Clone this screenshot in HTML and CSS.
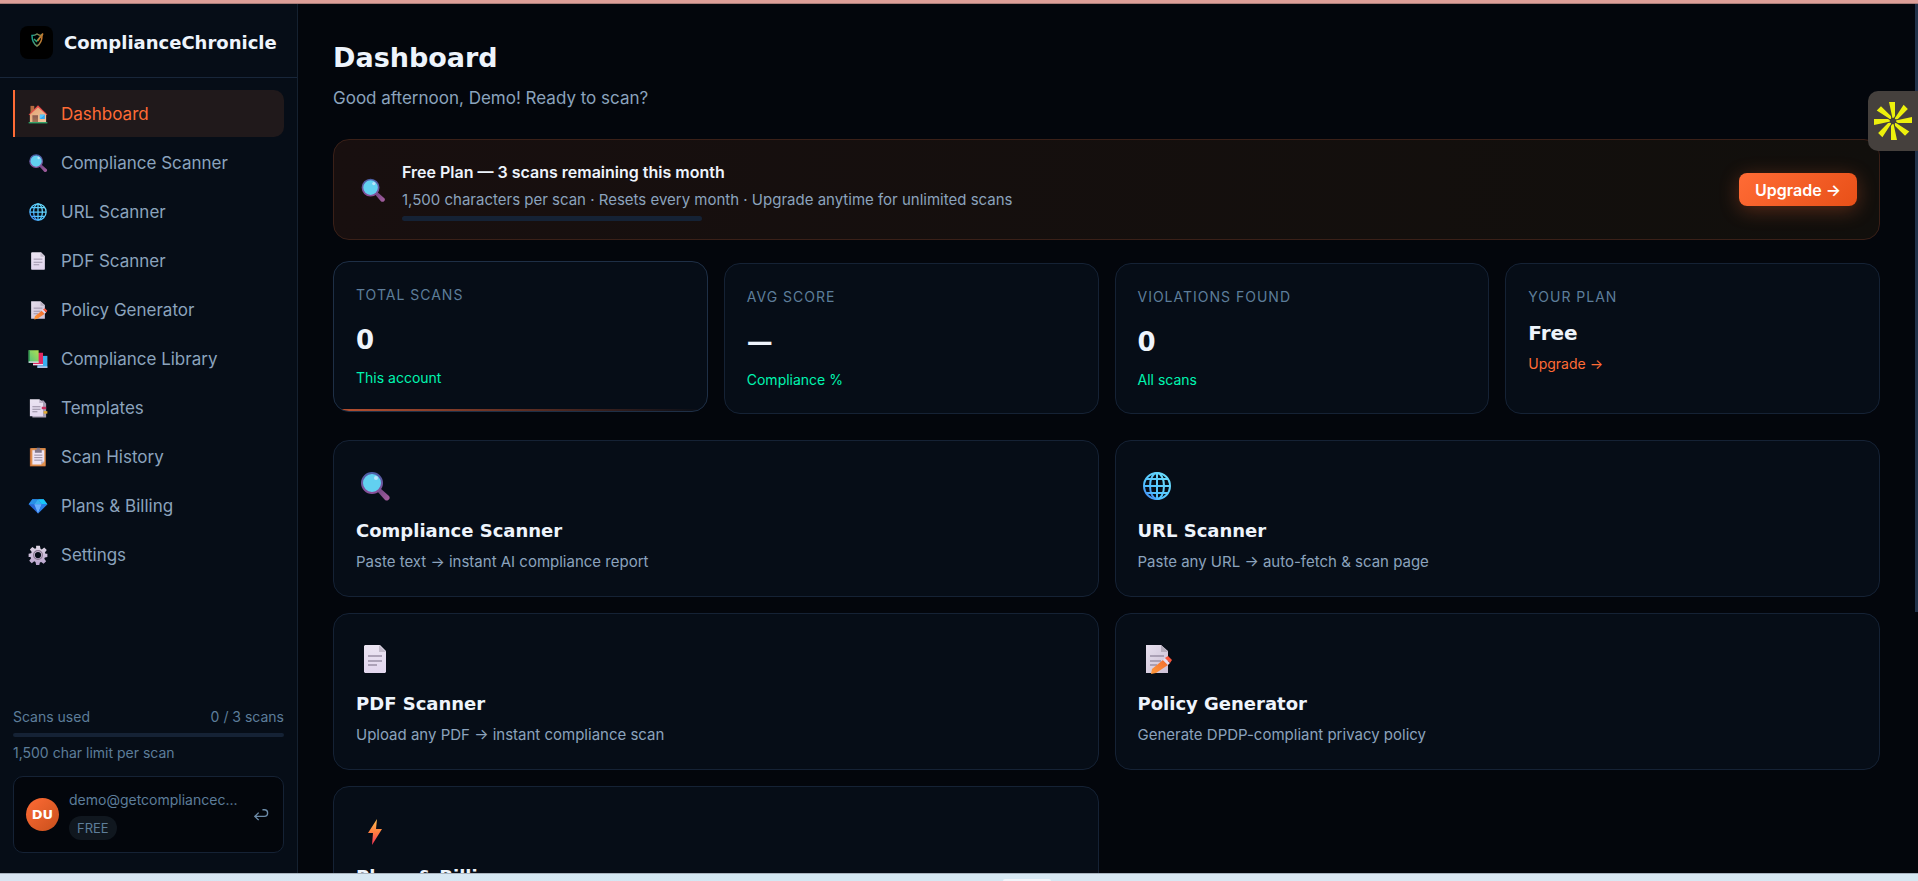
FILE: index.html
```
<!DOCTYPE html>
<html lang="en">

<head>
    <meta charset="UTF-8">
    <meta name="viewport" content="width=device-width, initial-scale=1.0">
    <title>Dashboard - ComplianceChronicle</title>
    <link rel="stylesheet" href="styles.css">
</head>

<body>
    <svg class="sprite" aria-hidden="true">
        <defs>
            <linearGradient id="g-wall" x1="0" y1="0" x2="1" y2="1">
                <stop offset="0" stop-color="#e0a070" />
                <stop offset="1" stop-color="#f4c8a0" />
            </linearGradient>
            <linearGradient id="g-door" x1="0" y1="0" x2="0" y2="1">
                <stop offset="0" stop-color="#8a5a50" />
                <stop offset="1" stop-color="#a87858" />
            </linearGradient>
            <linearGradient id="g-handle" x1="0" y1="0" x2="1" y2="1">
                <stop offset="0" stop-color="#6b4480" />
                <stop offset="1" stop-color="#a85fa0" />
            </linearGradient>
            <linearGradient id="g-rim" x1="0" y1="0" x2="0" y2="1">
                <stop offset="0" stop-color="#4b5fa8" />
                <stop offset="1" stop-color="#8a4f98" />
            </linearGradient>
            <linearGradient id="g-globe" x1="1" y1="0" x2="0" y2="1">
                <stop offset="0" stop-color="#6ee0fa" />
                <stop offset="0.7" stop-color="#50c0ff" />
                <stop offset="1" stop-color="#3f78f0" />
            </linearGradient>
            <linearGradient id="g-paper" x1="0" y1="0" x2="0" y2="1">
                <stop offset="0" stop-color="#ebe4f2" />
                <stop offset="1" stop-color="#e2d6ee" />
            </linearGradient>
            <linearGradient id="g-note" x1="0" y1="0" x2="1" y2="1">
                <stop offset="0" stop-color="#e6dfee" />
                <stop offset="1" stop-color="#cdc0d6" />
            </linearGradient>
            <linearGradient id="g-pencil" x1="0" y1="1" x2="1" y2="0">
                <stop offset="0" stop-color="#ff9a3c" />
                <stop offset="1" stop-color="#f06a30" />
            </linearGradient>
            <linearGradient id="g-green" x1="1" y1="0" x2="0" y2="1">
                <stop offset="0" stop-color="#b0e050" />
                <stop offset="1" stop-color="#50c080" />
            </linearGradient>
            <linearGradient id="g-bolt" x1="0" y1="0" x2="0" y2="1">
                <stop offset="0" stop-color="#ffc050" />
                <stop offset="0.5" stop-color="#ff8040" />
                <stop offset="1" stop-color="#f83058" />
            </linearGradient>
            <linearGradient id="g-gear" x1="0" y1="0" x2="0" y2="1">
                <stop offset="0" stop-color="#e0d8e6" />
                <stop offset="1" stop-color="#b8a2cc" />
            </linearGradient>
            <linearGradient id="g-shield" x1="0" y1="0" x2="1" y2="0">
                <stop offset="0" stop-color="#18a090" />
                <stop offset="1" stop-color="#d07828" />
            </linearGradient>
        </defs>

        <symbol id="home" viewBox="0 0 32 32">
            <path d="M4 3h6v12H4z" fill="#b56a40" />
            <path d="M3 15 16 4l13 11v14H3z" fill="url(#g-wall)" />
            <path d="M7 18h9v11H7z" fill="url(#g-door)" />
            <path d="M19 17h8v7h-8z" fill="#35a8f0" />
            <path d="M19 17h8l-8 7z" fill="#58c8ff" />
            <path d="M1 17 16 2l15 15-1 1L16 5 2 18z" fill="#e84848" />
            <path d="M1 29h30v2H1z" fill="#2fb070" />
        </symbol>

        <symbol id="search" viewBox="0 0 32 32">
            <path d="m21 18 9 8c2 2-1 6-4 4l-8-9z" fill="url(#g-handle)" />
            <circle cx="13" cy="13" r="10" fill="#62d0f0" stroke="url(#g-rim)" stroke-width="2" />
            <circle cx="17" cy="8" r="2" fill="#b8e4fa" />
        </symbol>

        <symbol id="globe" viewBox="0 0 32 32">
            <g fill="none" stroke="url(#g-globe)" stroke-width="2">
                <circle cx="16" cy="16" r="13" />
                <ellipse cx="16" cy="16" rx="7" ry="13" />
                <path d="M16 3q.01 13 0 26M3 16q13 .01 26 0M5 9q11 .01 22 0M5 23q11 .01 22 0" />
            </g>
        </symbol>

        <symbol id="page" viewBox="0 0 32 32">
            <path d="M6 2h15l6 6v21l-1 1H6l-1-1V3z" fill="url(#g-paper)" />
            <path d="m20 2 7 7h-7z" fill="#c4bccc" />
            <path d="M9 13h14M9 18h14M9 22h9" stroke="#9a90a6" stroke-width="1.5" />
        </symbol>

        <symbol id="memo" viewBox="0 0 32 32">
            <path d="M5 2h15l7 6v22H5z" fill="url(#g-note)" />
            <path d="m20 2 7 7h-7z" fill="#b5adbd" />
            <path d="M9 13h14M9 18h11M9 22h7" stroke="#9a90a6" stroke-width="1.5" />
            <path d="m22 17 5 5-12 8-5 1 1-5z" fill="url(#g-pencil)" />
            <path d="m22 17 2-2 5 5-2 2z" fill="#e8dcec" />
            <path d="m24 15 3-2 4 4-2 3z" fill="#f8563c" />
        </symbol>

        <symbol id="books" viewBox="0 0 32 32">
            <path d="M15 11h16v19H15z" fill="#38b0f0" />
            <path d="M15 28h16v2H15z" fill="#d8d0ec" />
            <path d="M8 6h16v20H8z" fill="#e02860" />
            <path d="M8 24h16v2H8z" fill="#eadcf0" />
            <path d="M1 2h16v20H1z" fill="url(#g-green)" />
            <path d="M1 2h2v18H1z" fill="#309a50" />
            <path d="M1 20h16v2H1z" fill="#e0dcf2" />
        </symbol>

        <symbol id="tabs" viewBox="0 0 32 32">
            <path d="M7 4h18l4 5v22H7z" fill="#a89eb4" />
            <path d="M3 2h15l6 6v21H3z" fill="url(#g-paper)" />
            <path d="m18 2 6 6h-6z" fill="#bdb4c8" />
            <path d="M7 14h13M7 18h13M7 22h8" stroke="#90869c" stroke-width="1.5" />
            <path d="M22 14h7v4h-7z" fill="#c83060" />
            <path d="M25 21h6v4h-6z" fill="#e0aa30" />
        </symbol>

        <symbol id="clipboard" viewBox="0 0 32 32">
            <path d="M3 2h25v29H3z" fill="#c8703c" />
            <path d="M5 2h23v28H5z" fill="#e0904c" />
            <path d="M7 5h19v18l-5 5H7z" fill="#eee4f4" />
            <path d="M21 28v-5h5z" fill="#b8aec2" />
            <path d="M11 4h3V1h5v3h3v5H11z" fill="#82788c" />
            <path d="M10 13h13M10 17h13M10 21h13" stroke="#90869c" stroke-width="1.5" />
        </symbol>

        <symbol id="gem" viewBox="0 0 32 32">
            <path d="M7 5h18l6 8-15 15L1 13z" fill="#2868d8" />
            <path d="M7 5h9l-6 8H1z" fill="#2890e8" />
            <path d="M16 5h9l6 8h-9z" fill="#18c8f8" />
            <path d="m16 5 6 8H10z" fill="#38b0f0" />
            <path d="M10 13h12l-6 15z" fill="#68b0ff" />
            <path d="M22 13h9L16 28z" fill="#2a80e8" />
        </symbol>

        <symbol id="gear" viewBox="0 0 32 32">
            <path fill="url(#g-gear)" fill-rule="evenodd"
                d="M13 1h6l1 5 2 1 4-3 4 4-3 4 1 2 3 0v5l-4 1-1 2 3 4-4 4-4-3-2 1-1 4h-5l-1-5-2-1-4 3-4-4 3-4-1-2-3 0v-5l4-1 1-2-3-4 4-4 4 3 2-1zM16 11a5 5 0 1 0 0 10 5 5 0 0 0 0-10z" />
            <circle cx="16" cy="16" r="7" fill="none" stroke="#887890" stroke-width="2" />
        </symbol>

        <symbol id="bolt" viewBox="0 0 32 32">
            <path d="m18 3-9 14h5l-1 12 10-16h-6z" fill="url(#g-bolt)" />
        </symbol>

        <symbol id="shield" viewBox="0 0 32 32">
            <path d="M16 4c4 3 7 3 10 3 0 10-2 16-10 21C8 23 6 17 6 7c3 0 6 0 10-3z" fill="none" stroke="url(#g-shield)"
                stroke-width="3" />
            <path d="m10 14 5 5 12-15" fill="none" stroke="#2aa878" stroke-width="3" />
            <path d="m17 18 11-15" stroke="#c87830" stroke-width="3" />
        </symbol>

        <symbol id="return" viewBox="0 0 16 16">
            <path d="M1 10h10a3.500 3.500 0 0 0 0-7h-2M5 6 1 10l4 4" fill="none" stroke="currentColor"
                stroke-width="1.500" />
        </symbol>

        <symbol id="burst" viewBox="0 0 38 38">
            <path id="ray" d="M15 0h6v14q-1 2-2 2t-1-2z" fill="#ecf00c" />
            <use href="#ray" transform="rotate(45 19 19)" />
            <use href="#ray" transform="rotate(90 19 19)" />
            <use href="#ray" transform="rotate(135 19 19)" />
            <use href="#ray" transform="rotate(180 19 19)" />
            <use href="#ray" transform="rotate(225 19 19)" />
            <use href="#ray" transform="rotate(270 19 19)" />
            <use href="#ray" transform="rotate(315 19 19)" />
        </symbol>
    </svg>

    <div class="strip-top"></div>

    <div class="app">
        <aside class="sidebar">
            <a class="brand" href="#">
                <span class="brand-logo"><svg class="brand-icon"><use href="#shield" /></svg></span>
                <span class="brand-name">ComplianceChronicle</span>
            </a>
            <nav class="nav">
                <a class="nav-item active" href="#"><svg class="nav-icon"><use href="#home" /></svg>Dashboard</a>
                <a class="nav-item" href="#"><svg class="nav-icon"><use href="#search" /></svg>Compliance Scanner</a>
                <a class="nav-item" href="#"><svg class="nav-icon"><use href="#globe" /></svg>URL Scanner</a>
                <a class="nav-item" href="#"><svg class="nav-icon"><use href="#page" /></svg>PDF Scanner</a>
                <a class="nav-item" href="#"><svg class="nav-icon"><use href="#memo" /></svg>Policy Generator</a>
                <a class="nav-item" href="#"><svg class="nav-icon"><use href="#books" /></svg>Compliance Library</a>
                <a class="nav-item" href="#"><svg class="nav-icon"><use href="#tabs" /></svg>Templates</a>
                <a class="nav-item" href="#"><svg class="nav-icon"><use href="#clipboard" /></svg>Scan History</a>
                <a class="nav-item" href="#"><svg class="nav-icon"><use href="#gem" /></svg>Plans &amp; Billing</a>
                <a class="nav-item" href="#"><svg class="nav-icon"><use href="#gear" /></svg>Settings</a>
            </nav>
            <div class="sidebar-foot">
                <div class="usage">
                    <div class="usage-row"><span>Scans used</span><span>0 / 3 scans</span></div>
                    <div class="track"></div>
                    <div>1,500 char limit per scan</div>
                </div>
                <div class="user">
                    <div class="avatar">DU</div>
                    <div class="user-info">
                        <div class="user-mail">demo@getcompliancec...</div>
                        <span class="plan-tag">FREE</span>
                    </div>
                    <button class="logout" type="button" aria-label="Log out"><svg class="logout-icon"><use href="#return" /></svg></button>
                </div>
            </div>
        </aside>

        <main class="main">
            <h1 class="title">Dashboard</h1>
            <p class="subtitle">Good afternoon, Demo! Ready to scan?</p>

            <section class="banner">
                <svg class="banner-icon"><use href="#search" /></svg>
                <div class="banner-body">
                    <div class="banner-title">Free Plan — 3 scans remaining this month</div>
                    <div class="banner-text">1,500 characters per scan · Resets every month · Upgrade anytime for unlimited scans</div>
                    <div class="track banner-track"></div>
                </div>
                <button class="upgrade" type="button">Upgrade →</button>
            </section>

            <section class="stats">
                <div class="card stat raised">
                    <div class="stat-label">Total Scans</div>
                    <div class="stat-value">0</div>
                    <div class="stat-note">This account</div>
                </div>
                <div class="card stat">
                    <div class="stat-label">Avg Score</div>
                    <div class="stat-value">—</div>
                    <div class="stat-note">Compliance %</div>
                </div>
                <div class="card stat">
                    <div class="stat-label">Violations Found</div>
                    <div class="stat-value">0</div>
                    <div class="stat-note">All scans</div>
                </div>
                <div class="card stat">
                    <div class="stat-label">Your Plan</div>
                    <div class="stat-value plan">Free</div>
                    <a class="stat-note orange" href="#">Upgrade →</a>
                </div>
            </section>

            <section class="tools">
                <a class="card tool" href="#">
                    <svg class="tool-icon"><use href="#search" /></svg>
                    <h2 class="tool-title">Compliance Scanner</h2>
                    <p class="tool-text">Paste text → instant AI compliance report</p>
                </a>
                <a class="card tool" href="#">
                    <svg class="tool-icon"><use href="#globe" /></svg>
                    <h2 class="tool-title">URL Scanner</h2>
                    <p class="tool-text">Paste any URL → auto-fetch &amp; scan page</p>
                </a>
                <a class="card tool" href="#">
                    <svg class="tool-icon"><use href="#page" /></svg>
                    <h2 class="tool-title">PDF Scanner</h2>
                    <p class="tool-text">Upload any PDF → instant compliance scan</p>
                </a>
                <a class="card tool" href="#">
                    <svg class="tool-icon"><use href="#memo" /></svg>
                    <h2 class="tool-title">Policy Generator</h2>
                    <p class="tool-text">Generate DPDP-compliant privacy policy</p>
                </a>
                <a class="card tool" href="#">
                    <svg class="tool-icon"><use href="#bolt" /></svg>
                    <h2 class="tool-title">Plans &amp; Billing</h2>
                </a>
            </section>
        </main>
        <div class="scroll-thumb"></div>
        <button class="widget" type="button" aria-label="Open widget"><svg class="widget-icon"><use href="#burst" /></svg></button>
    </div>

    <div class="strip-bottom"><div class="tab"></div></div>
</body>

</html>
```
FILE: styles.css
```
* {
    box-sizing: border-box;
}

body {
    background-color: #03060c;
    color: #8ba3bd;
    display: flex;
    flex-direction: column;
    font-family: Inter, "Liberation Sans", sans-serif;
    height: 100vh;
    margin: 0;
    overflow: hidden;
}

a {
    color: inherit;
    text-decoration: none;
}

button {
    border: none;
    cursor: pointer;
    font-family: inherit;
}

.sprite {
    height: 0;
    position: absolute;
    width: 0;
}

.strip-top {
    background-color: #dd9f98;
    border-bottom: #a87c78 1px solid;
    flex: none;
    height: 4px;
}

.strip-bottom {
    background: linear-gradient(90deg, #d9e6f2, #d3e8f3 40%, #dbe8f3 70%, #d6e8f2);
    border-top: #a9b4bf 1px solid;
    display: flex;
    flex: none;
    height: 8px;
    justify-content: center;
    padding: 5px 0 0 136px;
}

.tab {
    background-color: #f1f5fa;
    border-radius: 4px 4px 0 0;
    width: 48px;
}

.app {
    display: flex;
    flex: 1;
    min-height: 0;
    position: relative;
}

/* sidebar */
.sidebar {
    background-color: #060d17;
    border-right: #152130 1px solid;
    display: flex;
    flex: none;
    flex-direction: column;
    width: 298px;
}

.brand {
    align-items: center;
    border-bottom: #18263a 1px solid;
    display: flex;
    gap: 11px;
    height: 74px;
    padding: 3px 12px 0 20px;
}

.brand-logo {
    align-items: center;
    background-color: #000000;
    border-radius: 8px;
    display: flex;
    flex: none;
    height: 33px;
    justify-content: center;
    padding-bottom: 4px;
    width: 33px;
}

.brand-icon {
    height: 16px;
    width: 16px;
}

.brand-name {
    color: #eef4fc;
    font-family: "DejaVu Sans", sans-serif;
    font-size: 18px;
    font-weight: 700;
}

.nav {
    display: flex;
    flex-direction: column;
    gap: 2px;
    padding: 12px 13px;
}

.nav-item {
    align-items: center;
    border-left: transparent 2px solid;
    border-radius: 10px;
    display: flex;
    font-size: 17px;
    gap: 13px;
    height: 47px;
    padding-left: 13px;
}

.nav-item.active {
    background-color: #20191b;
    border-bottom-left-radius: 0;
    border-left-color: #ff6b35;
    border-top-left-radius: 0;
    color: #ff6b35;
}

.nav-icon {
    height: 20px;
    width: 20px;
}

.sidebar-foot {
    color: #5d7d9a;
    font-size: 14px;
    line-height: 22px;
    margin-top: auto;
    padding: 0 13px 20px;
}

.usage-row {
    display: flex;
    justify-content: space-between;
}

.track {
    background-color: #152235;
    border-radius: 3px;
    height: 4px;
    margin: 5px 0;
}

.user {
    align-items: center;
    background-color: #03060c;
    border: #152235 1px solid;
    border-radius: 10px;
    display: flex;
    gap: 10px;
    margin-top: 12px;
    padding: 12px;
}

.avatar {
    background: linear-gradient(135deg, #ff6b35, #c8501c);
    border-radius: 50%;
    color: #ffffff;
    flex: none;
    font-family: "DejaVu Sans", sans-serif;
    font-size: 13px;
    font-weight: 700;
    line-height: 33px;
    text-align: center;
    width: 33px;
}

.user-info {
    flex: 1;
    min-width: 0;
}

.user-mail {
    white-space: nowrap;
}

.plan-tag {
    background-color: #10171f;
    border-radius: 12px;
    display: block;
    font-size: 13px;
    line-height: 24px;
    margin-top: 5px;
    padding: 0 8px;
    width: max-content;
}

.logout {
    background-color: transparent;
    color: #6c8ba8;
    padding: 0 2px;
}

.logout-icon {
    display: block;
    height: 15px;
    width: 15px;
}

/* content */
.main {
    flex: 1;
    min-width: 0;
    overflow: hidden;
    padding: 36px 38px 0 35px;
}

.title {
    color: #eef4fc;
    font-family: "DejaVu Sans", sans-serif;
    font-size: 27px;
    font-weight: 700;
    line-height: 36px;
    margin: 0;
}

.subtitle {
    font-size: 17px;
    line-height: 28px;
    margin: 8px 0 27px;
}

.banner {
    align-items: center;
    background: linear-gradient(90deg, #180f0f, #110f0c);
    border: #3a2018 1px solid;
    border-radius: 16px;
    display: flex;
    gap: 16px;
    padding: 18px 22px 18px 26px;
}

.banner-icon {
    flex: none;
    height: 26px;
    width: 26px;
}

.banner-body {
    flex: 1;
}

.banner-title {
    color: #eef4fc;
    font-size: 16px;
    font-weight: 600;
    line-height: 28px;
}

.banner-text {
    font-size: 15px;
    line-height: 24px;
    margin-top: 2px;
}

.banner-track {
    height: 5px;
    margin: 4px 0 0;
    max-width: 300px;
}

.upgrade {
    background: linear-gradient(135deg, #ff6b35, #e85018);
    border-radius: 8px;
    box-shadow: 0 4px 20px rgba(255, 107, 53, 0.3);
    color: #ffffff;
    font-size: 16px;
    font-weight: 600;
    height: 33px;
    padding: 0 16px;
}

.card {
    background-color: #060d17;
    border: #152235 1px solid;
    border-radius: 16px;
    padding: 22px;
}

.stats {
    display: grid;
    gap: 16px;
    grid-template-columns: repeat(4, 1fr);
    margin-top: 23px;
}

.raised {
    border-color: #1e2f46;
    overflow: hidden;
    position: relative;
    transform: translateY(-2px);
}

.raised::after {
    background: linear-gradient(90deg, #b85030, transparent);
    bottom: 0;
    content: "";
    height: 2px;
    left: 0;
    position: absolute;
    right: 0;
}

.stat-label {
    color: #5d7d9a;
    font-size: 14px;
    letter-spacing: 1px;
    line-height: 22px;
    text-transform: uppercase;
}

.stat-value {
    color: #eef4fc;
    font-family: "DejaVu Sans", sans-serif;
    font-size: 26px;
    font-weight: 700;
    line-height: 46px;
    margin: 11px 0 4px;
}

.stat-value.plan {
    font-size: 20px;
    line-height: 28px;
    margin-bottom: 6px;
}

.stat-note {
    color: #00f5b0;
    display: block;
    font-size: 14px;
    line-height: 22px;
}

.stat-note.orange {
    color: #ff6b35;
}

.tools {
    display: grid;
    gap: 16px;
    grid-template-columns: repeat(2, 1fr);
    margin-top: 26px;
}

.tool-icon {
    display: block;
    height: 32px;
    margin: 7px 0 15px 3px;
    width: 32px;
}

.tool-title {
    color: #eef4fc;
    font-family: "DejaVu Sans", sans-serif;
    font-size: 18px;
    font-weight: 700;
    line-height: 28px;
    margin: 0;
}

.tool-text {
    font-size: 15px;
    line-height: 24px;
    margin: 5px 0 0;
}

.scroll-thumb {
    background-color: #22324a;
    height: 70%;
    position: absolute;
    right: 0;
    top: 0;
    width: 3px;
}

.widget {
    background-color: #45403d;
    border-radius: 10px 0 0 10px;
    height: 60px;
    padding: 0 6px;
    position: absolute;
    right: 0;
    top: 87px;
    width: 50px;
}

.widget-icon {
    display: block;
    height: 38px;
    width: 38px;
}
```
